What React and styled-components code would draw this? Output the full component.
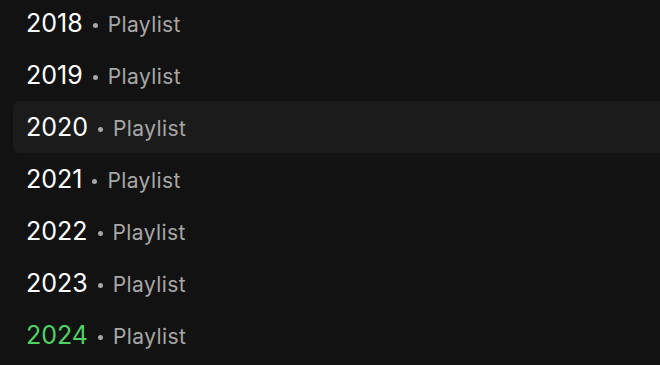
import React from 'react';
import styled, { createGlobalStyle } from 'styled-components';

const GlobalStyle = createGlobalStyle`
	html, body {
		margin: 0;
		padding: 0;
		background-color: #121212;
	}
	body {
		font-family: Inter, "Liberation Sans", Arial, sans-serif;
		overflow: hidden;
	}
`;

const StyledList = styled.div`
	display: flex;
	flex-direction: column;
	width: 660px;
	height: 365px;
	margin-top: -3px;
	padding-left: 13px;
	box-sizing: border-box;
`;

const StyledRow = styled.div`
	display: flex;
	align-items: baseline;
	height: 52px;
	padding: 0 13px;
	box-sizing: border-box;
	line-height: 52px;
	border-radius: 7px 0 0 7px;
	background-color: ${(props) => (props.active ? '#1b1b1b' : 'transparent')};

	&:hover { cursor: pointer; }
`;

const Year = styled.span`
	font-size: 25px;
	letter-spacing: 0px;
	font-variant-numeric: proportional-nums;
	color: ${(props) => (props.playing ? '#4fd163' : '#ffffff')};
`;

const Dot = styled.span`
	display: inline-block;
	width: 5px;
	height: 5px;
	margin: 0 10px 0 10px;
	border-radius: 50%;
	background-color: #a7a7a7;
	position: relative;
	top: -4px;
`;

const Kind = styled.span`
	font-size: 21px;
	letter-spacing: 0.4px;
	color: #a7a7a7;
`;

const playlists = [
	{ year: '2018' },
	{ year: '2019' },
	{ year: '2020', active: true },
	{ year: '2021' },
	{ year: '2022' },
	{ year: '2023' },
	{ year: '2024', playing: true },
];

export default function App() {
	return (
		<>
			<GlobalStyle />
			<StyledList>
				{playlists.map((p) => (
					<StyledRow key={p.year} active={p.active}>
						<Year playing={p.playing}>{p.year}</Year>
						<Dot />
						<Kind>Playlist</Kind>
					</StyledRow>
				))}
			</StyledList>
		</>
	);
}
